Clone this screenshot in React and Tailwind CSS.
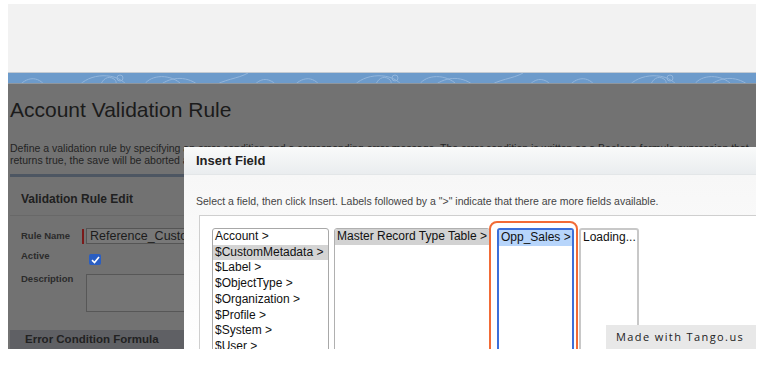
import React from 'react'

/* ── Field lists shown in the Insert Field dialog ── */
const GLOBAL_FIELDS = [
    'Account >',
    '$CustomMetadata >',
    '$Label >',
    '$ObjectType >',
    '$Organization >',
    '$Profile >',
    '$System >',
    '$User >',
]

const SANS = "font-['Liberation_Sans',Arial,sans-serif]"

/* ── Swirly blue header band ── */
function HeaderBand() {
    const curves = []
    for (let i = 0; i < 3; i++) {
        const o = i * 275
        curves.push(
            <g key={i} transform={`translate(${o} 0)`}>
                <path d="M10 14 C 18 4, 30 2, 38 14" />
                <path d="M70 14 C 80 0, 110 -2, 120 14" />
                <path d="M92 14 C 94 6, 100 2, 106 6 C 110 9, 108 14, 104 14" />
                <circle cx="112" cy="5" r="3" />
                <path d="M135 14 C 140 2, 160 0, 172 10" />
                <path d="M150 14 C 160 4, 178 2, 190 12" />
                <path d="M205 14 C 215 6, 230 6, 240 0" />
                <path d="M245 14 C 252 4, 262 4, 270 14" />
            </g>
        )
    }
    return (
        <div className="h-[12px] bg-[#6d9bcb] border-t border-[#c4cbd3] border-b border-b-[#8f969d] overflow-hidden">
            <svg width="748" height="12" viewBox="0 0 748 12" fill="none" stroke="#93b6dc" strokeWidth="1">
                {curves}
            </svg>
        </div>
    )
}

/* ── Dimmed page underneath the dialog ── */
function BackgroundPage() {
    return (
        <div className={`flex-1 bg-[#727272] flex flex-col ${SANS}`}>
            <h1 className="mt-[14px] pl-[2px] text-[21px] leading-[24px] text-[#1b1b1b]">
                Account Validation Rule
            </h1>
            <p className="mt-[20px] pl-[2px] text-[10.5px] leading-[12px] text-[#242424] whitespace-nowrap">
                Define a validation rule by specifying an error condition and a corresponding error message. The error condition is written as a Boolean formula expression that
                <br />
                returns true, the save will be aborted and the error message will be displayed.
            </p>

            {/* ── Validation Rule Edit section ── */}
            <div className="mt-[8px] ml-[2px] flex-1 flex flex-col border-t-[3px] border-[#4d5662]">
                <div className="h-[38px] pl-[11px] pt-[15px] text-[12px] leading-[15px] font-bold text-[#202020]">
                    Validation Rule Edit
                </div>
                <div className="h-px bg-[#686868]" />

                <div className="pl-[11px] pt-[12px] flex flex-col">
                    <div className="flex items-center h-[16px]">
                        <span className="w-[61px] text-[9.5px] font-bold text-[#2b2b2b]">Rule Name</span>
                        <span className="w-[2px] h-[15px] bg-[#7a1a1a] mr-[2px]" />
                        <div className="flex-1 h-[16px] border border-[#555] bg-[#787878] pl-[3px] text-[12.5px] leading-[14px] text-[#1c1c1c] whitespace-nowrap overflow-hidden">
                            Reference_Custom_Metadata
                        </div>
                    </div>

                    <div className="flex mt-[6px] h-[15px]">
                        <span className="w-[68px] text-[9.5px] leading-[12px] font-bold text-[#2b2b2b]">Active</span>
                        <span className="mt-[4px] w-[12px] h-[11px] rounded-[2px] bg-[#2a5ec2] flex items-center justify-center">
                            <svg width="9" height="8" viewBox="0 0 9 8" fill="none" stroke="white" strokeWidth="1.6">
                                <path d="M1 4.2 L3.5 6.5 L8 1" />
                            </svg>
                        </span>
                    </div>

                    <div className="flex mt-[9px]">
                        <span className="w-[65px] text-[9.5px] leading-[10px] font-bold text-[#2b2b2b]">Description</span>
                        <div className="flex-1 h-[38px] border border-[#575757] bg-[#757575]" />
                    </div>
                </div>

                <div className="mt-auto h-[19px] bg-[#5f6064] pl-[15px] text-[11.5px] leading-[19px] font-bold text-[#222]">
                    Error Condition Formula
                </div>
            </div>
        </div>
    )
}

/* ── One select list column ── */
function FieldList({ items, width, selected, selectedClass, frameClass }) {
    return (
        <div className={`${width} self-stretch bg-white ${frameClass} rounded-t-[3px] overflow-hidden flex-shrink-0`}>
            {items.map((item, idx) => (
                <div
                    key={item}
                    className={[
                        'pl-[2px] text-[12px] leading-[15.7px] text-[#111] whitespace-nowrap',
                        idx === selected ? selectedClass : '',
                    ].join(' ')}
                >
                    {item}
                </div>
            ))}
        </div>
    )
}

/* ── Insert Field dialog ── */
function InsertFieldDialog() {
    return (
        <div className={`absolute left-[176px] top-[143px] right-0 bottom-0 flex flex-col bg-white overflow-hidden ${SANS}`}>
            <div className="h-[28px] flex-shrink-0 pl-[12px] flex items-center bg-gradient-to-b from-[#f9fafa] to-[#eaedef] border-b border-[#e3e6e8]">
                <span className="text-[13px] font-bold text-[#222]">Insert Field</span>
            </div>

            <div className="flex-1 flex flex-col bg-gradient-to-b from-[#f7f7f7] to-white">
                <p className="pl-[12px] mt-[21px] text-[10.5px] leading-[11px] text-[#444] whitespace-nowrap">
                    Select a field, then click Insert. Labels followed by a "&gt;" indicate that there are more fields available.
                </p>

                <div className="relative mt-[8px] ml-[15px] flex-1 bg-white border-t border-l border-[#cfcfcf] pl-[12px] pt-[12px] flex">
                    <FieldList
                        items={GLOBAL_FIELDS}
                        width="w-[117px]"
                        selected={1}
                        selectedClass="bg-[#d4d4d4]"
                        frameClass="border border-[#a8a8a8]"
                    />
                    <div className="w-[5px]" />
                    <FieldList
                        items={['Master Record Type Table >']}
                        width="w-[156px]"
                        selected={0}
                        selectedClass="bg-[#d2d2d2]"
                        frameClass="border border-[#b0b0b0]"
                    />
                    <div className="w-[7px]" />
                    <FieldList
                        items={['Opp_Sales >']}
                        width="w-[77px]"
                        selected={0}
                        selectedClass="bg-[#b7d5fb]"
                        frameClass="border-2 border-[#3d6fd9]"
                    />
                    <div className="w-[5px]" />
                    <FieldList
                        items={['Loading...']}
                        width="w-[60px]"
                        selected={-1}
                        selectedClass=""
                        frameClass="border-2 border-[#c8c8c8]"
                    />

                    {/* orange callout round the selected column */}
                    <div className="absolute left-[289px] top-[5px] w-[89px] h-[200px] border-2 border-[#f26b36] rounded-[8px]" />
                </div>
            </div>
        </div>
    )
}

export default function App() {
    return (
        <div className="w-[778px] h-[374px] bg-white pt-[4px] pl-[8px] overflow-hidden">
            <div className="relative w-[748px] h-[345px] flex flex-col overflow-hidden">
                <div className="h-[68px] bg-[#f2f2f2] flex-shrink-0" />
                <HeaderBand />
                <BackgroundPage />
                <InsertFieldDialog />

                {/* watermark badge */}
                <div className="absolute right-0 bottom-0 w-[150px] h-[24px] bg-[#e8e8e8] flex items-center pl-[10px] font-['Open_Sans',sans-serif] text-[11px] tracking-[1.4px] text-[#222]">
                    Made with Tango.us
                </div>
            </div>
        </div>
    )
}
